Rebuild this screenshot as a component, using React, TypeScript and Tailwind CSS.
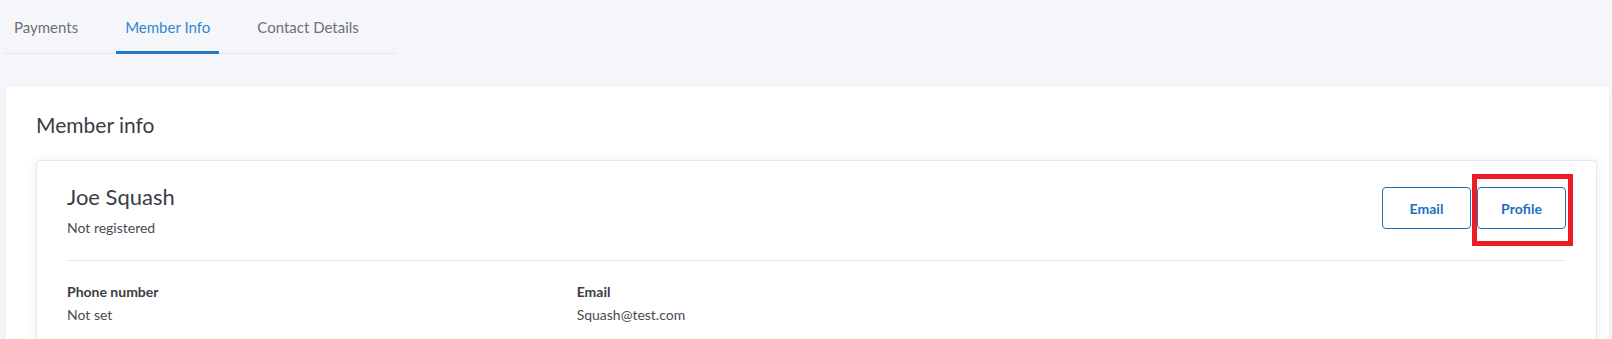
import { useState } from "react";

const tabs = ["Payments", "Member Info", "Contact Details"];

export default function App() {
  const [active, setActive] = useState("Member Info");

  return (
    <div className="min-h-screen bg-[#f5f6fa] pl-[6px] pr-[3px] font-['Lato',sans-serif] text-[#3b3c45]">
      <div className="ml-[-1px] flex w-[390px] gap-[29px] border-b border-[#e4e6ec]">
        {tabs.map((t) => (
          <button
            key={t}
            onClick={() => setActive(t)}
            className={
              "-mb-px border-b-[3px] px-[9px] pt-[17px] pb-[14px] text-[15px] leading-[20px] " +
              (t === active
                ? "border-[#1e78c8] text-[#2f87d2]"
                : "border-transparent text-[#6d7078]")
            }
          >
            {t}
          </button>
        ))}
      </div>

      <div className="mt-[32px] rounded-[4px] bg-white pl-[30px] pr-[12px] pt-[25px] pb-[20px] shadow-[0_0_4px_rgba(30,40,80,0.04)]">
        <h2 className="text-[21px] leading-[28px]">Member info</h2>

        <div className="mt-[21px] rounded-[4px] border border-[#e6e8ee] bg-white px-[30px] pt-[22px] pb-[25px] shadow-[0_0_12px_rgba(30,40,80,0.06)]">
          <div className="flex items-start justify-between border-b border-[#e8e9ee] pb-[22px]">
            <div>
              <div className="text-[22px] leading-[28px]">Joe Squash</div>
              <div className="mt-[7px] text-[14px] leading-[20px] text-[#4a4b53]">Not registered</div>
            </div>
            <div className="mt-[4px] flex gap-[6px]">
              <button className="h-[42px] w-[89px] rounded-[4px] border border-[#1f6fbf] text-[14px] font-bold text-[#1f6fbf]">
                Email
              </button>
              <div className="relative">
                <button className="h-[42px] w-[89px] rounded-[4px] border border-[#1f6fbf] text-[14px] font-bold text-[#1f6fbf]">
                  Profile
                </button>
                <div className="pointer-events-none absolute left-[-5px] top-[-13px] h-[72px] w-[101px] border-[5px] border-[#ed1c24]" />
              </div>
            </div>
          </div>

          <div className="mt-[21px] grid grid-cols-3 gap-x-[30px] text-[14px] leading-[20px]">
            <div>
              <div className="font-bold">Phone number</div>
              <div className="mt-[3px] text-[#4a4b53]">Not set</div>
            </div>
            <div>
              <div className="font-bold">Email</div>
              <div className="mt-[3px] text-[#4a4b53]">Squash@test.com</div>
            </div>
          </div>
        </div>
      </div>
    </div>
  );
}
